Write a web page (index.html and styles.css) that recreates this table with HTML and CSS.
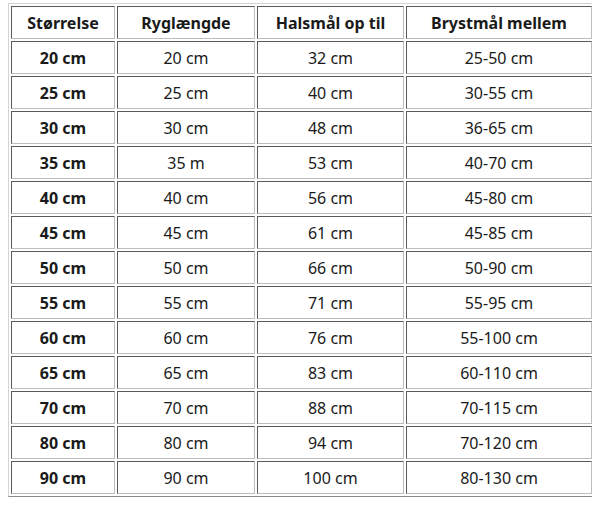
FILE: index.html
```html
<!DOCTYPE html>
<html lang="da">
<head>
<meta charset="utf-8">
<title>Størrelsesguide</title>
<link rel="stylesheet" href="styles.css">
</head>
<body>
<table class="size-table">
  <colgroup>
    <col class="c1"><col class="c2"><col class="c3"><col class="c4">
  </colgroup>
  <thead>
    <tr><th>Størrelse</th><th>Ryglængde</th><th>Halsmål op til</th><th>Brystmål mellem</th></tr>
  </thead>
  <tbody>
    <tr><th>20 cm</th><td>20 cm</td><td>32 cm</td><td>25-50 cm</td></tr>
    <tr><th>25 cm</th><td>25 cm</td><td>40 cm</td><td>30-55 cm</td></tr>
    <tr><th>30 cm</th><td>30 cm</td><td>48 cm</td><td>36-65 cm</td></tr>
    <tr><th>35 cm</th><td>35 m</td><td>53 cm</td><td>40-70 cm</td></tr>
    <tr><th>40 cm</th><td>40 cm</td><td>56 cm</td><td>45-80 cm</td></tr>
    <tr><th>45 cm</th><td>45 cm</td><td>61 cm</td><td>45-85 cm</td></tr>
    <tr><th>50 cm</th><td>50 cm</td><td>66 cm</td><td>50-90 cm</td></tr>
    <tr><th>55 cm</th><td>55 cm</td><td>71 cm</td><td>55-95 cm</td></tr>
    <tr><th>60 cm</th><td>60 cm</td><td>76 cm</td><td>55-100 cm</td></tr>
    <tr><th>65 cm</th><td>65 cm</td><td>83 cm</td><td>60-110 cm</td></tr>
    <tr><th>70 cm</th><td>70 cm</td><td>88 cm</td><td>70-115 cm</td></tr>
    <tr><th>80 cm</th><td>80 cm</td><td>94 cm</td><td>70-120 cm</td></tr>
    <tr><th>90 cm</th><td>90 cm</td><td>100 cm</td><td>80-130 cm</td></tr>
  </tbody>
</table>
</body>
</html>
```
FILE: styles.css
```css
html, body {
  background: #ffffff;
}
body {
  margin: 3px 8px 8px 8px;
  font-family: "Noto Sans", "DejaVu Sans", sans-serif;
  color: #1a1a1a;
}
.size-table {
  width: 584px;
  border-collapse: separate;
  border-spacing: 2px;
  border: 1px solid;
  border-color: #d4d4d4 #8a8a8a #8a8a8a #d4d4d4;
  table-layout: fixed;
}
.c1 { width: 104px; }
.c2 { width: 138px; }
.c3 { width: 147px; }
.c4 { width: 186px; }
.size-table th,
.size-table td {
  height: 31px;
  padding: 0;
  text-align: center;
  vertical-align: middle;
  font-size: 16px;
  line-height: 20px;
  border: 1px solid;
  border-color: #5a5a5a #bdbdbd #bdbdbd #5a5a5a;
}
.size-table th {
  font-weight: 700;
}
.size-table td {
  font-weight: 400;
}
```
